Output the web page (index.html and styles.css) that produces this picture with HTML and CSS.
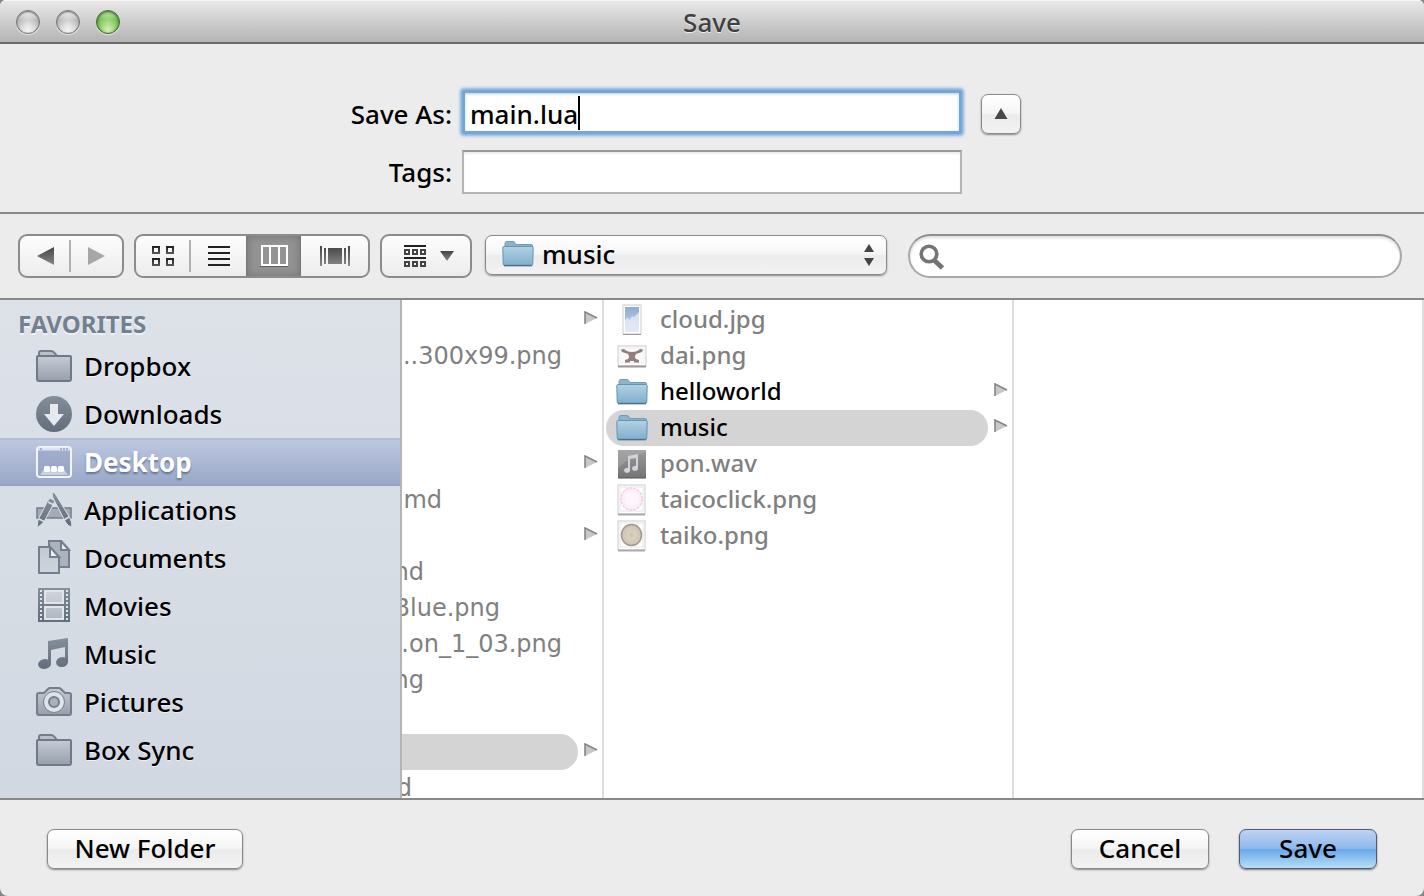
FILE: index.html
```html
<!DOCTYPE html>
<html lang="en">
<head>
<meta charset="utf-8">
<title>Save</title>
<link rel="stylesheet" href="styles.css">
</head>
<body>
<svg class="defs" aria-hidden="true">
  <defs>
    <linearGradient id="steel" x1="0" y1="0" x2="0" y2="1"><stop offset="0" stop-color="#858e9b"/><stop offset="1" stop-color="#636d7b"/></linearGradient>
    <linearGradient id="pale" x1="0" y1="0" x2="0" y2="1"><stop offset="0" stop-color="#c6cbd4"/><stop offset="1" stop-color="#979fac"/></linearGradient>
    <linearGradient id="paper" x1="0" y1="0" x2="0" y2="1"><stop offset="0" stop-color="#c3c9d1"/><stop offset="1" stop-color="#cfd5dd"/></linearGradient>
    <linearGradient id="blue" x1="0" y1="0" x2="0" y2="1"><stop offset="0" stop-color="#b4d1e3"/><stop offset="1" stop-color="#7eaece"/></linearGradient>
    <linearGradient id="dark" x1="0" y1="0" x2="0" y2="1"><stop offset="0" stop-color="#222"/><stop offset="1" stop-color="#555"/></linearGradient>
    <linearGradient id="mid" x1="0" y1="0" x2="0" y2="1"><stop offset="0" stop-color="#444"/><stop offset="1" stop-color="#888"/></linearGradient>
    <linearGradient id="sky" x1="0" y1="0" x2="0" y2="1"><stop offset="0" stop-color="#8eabd3"/><stop offset="1" stop-color="#c9daee"/></linearGradient>
    <linearGradient id="wav" x1="0" y1="0" x2="0" y2="1"><stop offset="0" stop-color="#9a9a9a"/><stop offset="1" stop-color="#747474"/></linearGradient>
    <radialGradient id="drum"><stop offset="0" stop-color="#cfbfa4"/><stop offset=".3" stop-color="#dbd0be"/><stop offset="1" stop-color="#cdc4b6"/></radialGradient>
    <symbol id="folder" viewBox="0 0 32 28">
      <path d="M3 6V3.500Q3 1.500 5 1.500H11Q12.500 1.500 13 3L13.500 4.500H29.500Q30.500 4.500 30.500 6V9H3Z" fill="#8db4cd" stroke="#6f9bb8"/>
      <path d="M.8 8Q.8 6.500 2 6.500H30Q31.200 6.500 31.200 8L30.800 24Q30.700 25.500 29.500 25.500H2.500Q1.300 25.500 1.200 24Z" fill="url(#blue)" stroke="#6694b3"/>
      <path d="M2 25.600H30" stroke="#4f7085" stroke-width="1.500"/>
    </symbol>
    <symbol id="side-folder" viewBox="0 0 36 36">
      <path d="M3 8V5Q3 3 5 3H15Q17 3 18 4.500L21 8" fill="#b9c0ca" stroke="#737d8c" stroke-width="2"/>
      <path d="M2 8H34Q35 8 35 9V31Q35 33 33 33H3Q1 33 1 31V9Q1 8 2 8Z" fill="url(#pale)" stroke="#6f7988" stroke-width="2"/>
    </symbol>
    <symbol id="more" viewBox="0 0 14 14"><path d="M1 1L13 7L1 13Z" fill="#c8c8c8"/><path d="M1 13V1L13 7" fill="none" stroke="#858585" stroke-width="1.600"/></symbol>
  </defs>
</svg>

<main class="window">
  <header class="titlebar">
    <div class="lights">
      <button class="light" aria-label="Close"></button>
      <button class="light" aria-label="Minimize"></button>
      <button class="light light-zoom" aria-label="Zoom"></button>
    </div>
    <h1>Save</h1>
  </header>

  <section class="form">
    <label class="form-label first" for="name">Save As:</label>
    <div class="field">
      <input class="text-input focused" id="name" type="text" value="main.lua">
      <span class="caret"></span>
    </div>
    <button class="push collapse" aria-label="Collapse">
      <svg width="14" height="12" viewBox="0 0 14 12"><path d="M7 0L13.500 11H.5Z" fill="#484848"/></svg>
    </button>
    <label class="form-label" for="tags">Tags:</label>
    <div class="field"><input class="text-input" id="tags" type="text"></div>
  </section>

  <nav class="toolbar">
    <div class="segments nav-group">
      <button class="segment" aria-label="Back"><svg width="18" height="18" viewBox="0 0 18 18"><path d="M17 0V18L0 9Z" fill="url(#mid)"/></svg></button>
      <button class="segment" aria-label="Forward"><svg width="18" height="18" viewBox="0 0 18 18"><path d="M0 0V18L17 9Z" fill="#a6a6a6"/></svg></button>
    </div>
    <div class="segments view-group">
      <button class="segment" aria-label="Icons"><svg width="24" height="22" viewBox="0 0 24 22"><g fill="none" stroke="url(#dark)" stroke-width="2"><rect x="1" y="2" width="6" height="6"/><rect x="15" y="2" width="6" height="6"/><rect x="1" y="14" width="6" height="6"/><rect x="15" y="14" width="6" height="6"/></g></svg></button>
      <button class="segment" aria-label="List"><svg width="22" height="20" viewBox="0 0 22 20"><path d="M0 0H22V2H0ZM0 6H22V8H0ZM0 12H22V14H0ZM0 18H22V20H0Z" fill="#222"/></svg></button>
      <button class="segment active" aria-label="Columns" aria-pressed="true"><svg width="28" height="22" viewBox="0 0 28 22"><path d="M0 21.500H28" stroke="#606060"/><path d="M2 1H27V20H2ZM10 2V19M19 2V19" fill="none" stroke="#fff" stroke-width="2"/></svg></button>
      <button class="segment" aria-label="Cover Flow"><svg width="30" height="20" viewBox="0 0 30 20"><path d="M0 0H2V20H0ZM4 2H6V18H4ZM8 2H22V18H8ZM24 2H26V18H24ZM28 0H30V20H28Z" fill="url(#mid)"/></svg></button>
    </div>
    <button class="segments arrange" aria-label="Arrange" aria-haspopup="true">
      <svg width="22" height="22" viewBox="0 0 22 22"><path d="M0 0H22V2H0ZM0 12H22V14H0Z" fill="#222"/><g fill="none" stroke="#444" stroke-width="2"><path d="M1 5H5V9H1ZM9 5H13V9H9ZM17 5H21V9H17ZM1 17H5V21H1ZM9 17H13V21H9ZM17 17H21V21H17Z"/></g></svg>
      <svg width="14" height="10" viewBox="0 0 14 10"><path d="M0 0H14L7 10Z" fill="url(#mid)"/></svg>
    </button>
    <div class="popup">
      <select class="push" aria-label="Location"><option>music</option></select>
      <svg class="popup-folder" width="32" height="28"><use href="#folder"/></svg>
      <svg class="popup-arrows" width="10" height="22" viewBox="0 0 10 22"><path d="M5 0L10 8H0ZM0 14H10L5 22Z" fill="#444"/></svg>
    </div>
    <div class="search">
      <input type="search" aria-label="Search">
      <svg class="lens" width="26" height="28" viewBox="0 0 26 28"><circle cx="10" cy="11" r="7.800" fill="none" stroke="#757575" stroke-width="3.600"/><path d="M15.500 17.500L23.500 25" stroke="#757575" stroke-width="4.800"/></svg>
    </div>
  </nav>

  <section class="browser">
    <aside class="sidebar">
      <h2>FAVORITES</h2>
      <ul>
        <li><svg class="side-icon"><use href="#side-folder"/></svg>Dropbox</li>
        <li><svg class="side-icon" viewBox="0 0 36 36"><circle cx="18" cy="18" r="18" fill="url(#steel)"/><path d="M14 8H22V18H28L18 30L8 18H14Z" fill="#e6eaef"/></svg>Downloads</li>
        <li class="selected"><svg class="side-icon" viewBox="0 0 36 36"><rect x="1" y="3" width="34" height="30" rx="3" fill="#8d9cbd" fill-opacity=".5" stroke="#f3f5fa" stroke-width="2"/><path d="M2 5H34" stroke="#dde3ef" stroke-width="3"/><path d="M24 5H26M27 5H29M30 5H32M4 5H6" stroke="#6f7d9c"/><path d="M8 25H28L32 31H4Z" fill="#c8d0e2"/><g fill="#fff"><rect x="8" y="22" width="6" height="6" rx="1.500"/><rect x="15" y="22" width="6" height="6" rx="1.500"/><rect x="22" y="22" width="6" height="6" rx="1.500"/></g></svg>Desktop</li>
        <li><svg class="side-icon" viewBox="0 0 36 36"><path d="M1 16H35V26H1Z" fill="#a3abb7" stroke="#747e8c" stroke-width="1.500"/><path d="M12 8Q14 5 18 8Q19 9 18 11L8 30L1 36L2 28Z" fill="url(#steel)" stroke="#dce1e8"/><path d="M16 1Q18-1 20 3L34 26Q36 30 36 35Q32 34 30 31L17 6Z" fill="url(#steel)" stroke="#dce1e8"/><path d="M12 10L18 13M3 27L9 30M28 28L33 25" stroke="#dce1e8" stroke-width="1.500"/></svg>Applications</li>
        <li><svg class="side-icon" viewBox="0 0 36 36"><g stroke="#747e8c" stroke-width="2"><path d="M13 1H25L33 10V27H13Z" fill="#abb3be"/><path d="M25 1V10H33Z" fill="#e8ebef"/><path d="M3 7H14L23 17V33H3Z" fill="url(#paper)"/><path d="M14 7V17H23Z" fill="#edf0f3"/></g></svg>Documents</li>
        <li><svg class="side-icon" viewBox="0 0 36 36"><path d="M2 0H34V34H2Z" fill="url(#steel)"/><path d="M8 2H28V16H8ZM8 18H28V32H8Z" fill="#e1e5ea"/><path d="M10 4H26V14H10ZM10 20H26V30H10Z" fill="url(#pale)" opacity=".65"/><path d="M5 2V33M31 2V33" stroke="#dfe4e9" stroke-width="2" stroke-dasharray="2 2"/></svg>Movies</li>
        <li><svg class="side-icon" viewBox="0 0 36 36"><path d="M12 5L32 2V25A6 5 -10 1 1 29 21.500V11L15 14V27A6.500 5 -10 1 1 12 23.500Z" fill="url(#steel)"/></svg>Music</li>
        <li><svg class="side-icon" viewBox="0 0 36 36"><path d="M3 9H8L12 5Q13 4 14 4H23Q24 4 25 5L29 9H33Q35 9 35 11V29Q35 31 33 31H3Q1 31 1 29V11Q1 9 3 9Z" fill="url(#pale)" stroke="#747e8c" stroke-width="2"/><circle cx="18" cy="18" r="10.500" fill="#dfe3e9" stroke="#747e8c"/><circle cx="18" cy="18" r="5" fill="#a9b1bc" stroke="#747e8c" stroke-width="2"/></svg>Pictures</li>
        <li><svg class="side-icon"><use href="#side-folder"/></svg>Box Sync</li>
      </ul>
    </aside>

    <ul class="column parent">
      <li><svg class="more"><use href="#more"/></svg></li>
      <li><span class="tail tail-long">..300x99.png</span></li>
      <li></li>
      <li></li>
      <li><svg class="more"><use href="#more"/></svg></li>
      <li><span class="tail tail-short">.md</span></li>
      <li><svg class="more"><use href="#more"/></svg></li>
      <li><span class="tail tail-tiny">md</span></li>
      <li><span class="tail tail-medium">Blue.png</span></li>
      <li><span class="tail tail-long">.on_1_03.png</span></li>
      <li><span class="tail tail-tiny">ng</span></li>
      <li></li>
      <li class="chosen"><svg class="more"><use href="#more"/></svg></li>
      <li><span class="tail tail-edge">d</span></li>
    </ul>

    <ul class="column">
      <li><svg class="file-icon" viewBox="0 0 32 32"><rect x="7" y="1" width="18" height="29" fill="#fff" stroke="#ccc"/><path d="M7 30.500H25" stroke="#999"/><path d="M9 3H23V28H9Z" fill="url(#sky)"/><path d="M9 16Q12 12 14 16Q15 11 18 13L23 8V28H9Z" fill="#eef2f8" opacity=".7"/></svg><span>cloud.jpg</span></li>
      <li><svg class="file-icon" viewBox="0 0 32 32"><rect x="2" y="6" width="28" height="20" fill="#fff" stroke="#ccc"/><path d="M2 26.500H30" stroke="#999" stroke-width="2"/><rect x="4" y="8" width="24" height="15" fill="#fafafa" stroke="#eee"/><path d="M5 9.500L8 9Q11 12 16 12T24 9L27 9.500L26 12L20 14Q18 17 20 19L23 20V22.500H18V21H14V22.500H9V20L12 19Q14 17 12 14L6 12Z" fill="#92807e"/></svg><span>dai.png</span></li>
      <li class="enabled"><svg class="file-icon" viewBox="0 0 32 32"><use href="#folder" y="2" width="32" height="28"/></svg><span>helloworld</span><svg class="more"><use href="#more"/></svg></li>
      <li class="enabled chosen"><svg class="file-icon" viewBox="0 0 32 32"><use href="#folder" y="2" width="32" height="28"/></svg><span>music</span><svg class="more"><use href="#more"/></svg></li>
      <li><svg class="file-icon" viewBox="0 0 32 32"><path d="M2 2H30V30H2Z" fill="url(#wav)"/><path d="M2 2H30V4Q15 8 2 20Z" fill="#bbb" opacity=".35"/><path d="M12 8L22 6V20A3 2.500 0 1 1 20 18V10L14 11V22A3 2.500 0 1 1 12 20Z" fill="#d0d3d8"/><path d="M2 30H30" stroke="#555"/></svg><span>pon.wav</span></li>
      <li><svg class="file-icon" viewBox="0 0 32 32"><rect x="2" y="1" width="27" height="29" fill="#fff" stroke="#ccc"/><path d="M2 30.500H29" stroke="#aaa" stroke-width="2"/><rect x="4" y="3" width="23" height="24" fill="#fff" stroke="#e6e6e6"/><ellipse cx="15.500" cy="15" rx="10.500" ry="11" fill="#fdeffa" stroke="#f3cbe9" stroke-width="1.500" stroke-dasharray="3 1"/><circle cx="16" cy="15" r="7" fill="#fff5fc"/></svg><span>taicoclick.png</span></li>
      <li><svg class="file-icon" viewBox="0 0 32 32"><rect x="2" y="1" width="27" height="29" fill="#fff" stroke="#ccc"/><path d="M2 30.500H29" stroke="#aaa" stroke-width="2"/><rect x="4" y="3" width="23" height="24" fill="#fff" stroke="#e6e6e6"/><ellipse cx="15.500" cy="15" rx="10" ry="10.500" fill="url(#drum)" stroke="#a39789" stroke-width="1.500"/></svg><span>taiko.png</span></li>
    </ul>
    <ul class="column"></ul>
  </section>

  <footer class="footer">
    <button class="push new-folder">New Folder</button>
    <div class="actions">
      <button class="push action">Cancel</button>
      <button class="push action default">Save</button>
    </div>
  </footer>
</main>
</body>
</html>
```
FILE: styles.css
```css
* { box-sizing: border-box; }

body {
  margin: 0;
  background: #858585;
  color: #000;
  font: 500 26px/36px "Noto Sans", "Open Sans", sans-serif;
}

button, input, select {
  margin: 0;
  padding: 0;
  border: 0;
  color: inherit;
  font: inherit;
  outline: none;
}

ul { margin: 0; padding: 0; list-style: none; }
svg { display: block; flex: none; }
.defs { position: absolute; width: 0; height: 0; }

.window {
  display: flex;
  flex-direction: column;
  min-height: 100vh;
  overflow: hidden;
  border-radius: 6px 6px 8px 8px;
  background: #ececec;
}

/* Title bar */
.titlebar {
  display: grid;
  grid-template-columns: 1fr auto 1fr;
  align-items: center;
  height: 44px;
  padding: 2px 16px 0;
  border-bottom: 2px solid #6a6a6a;
  background: linear-gradient(#e9e9e9, #b4b4b4);
  box-shadow: inset 0 1px 0 #f6f6f6;
}

.titlebar h1 {
  margin: 0;
  color: #404040;
  font-size: 26px;
  font-weight: 500;
  text-shadow: 0 1px 0 #eee;
}

.lights { display: flex; gap: 16px; }

.light {
  width: 24px;
  height: 24px;
  border: 1px solid #777;
  border-radius: 50%;
  background: radial-gradient(ellipse at 50% 90%, #f2f2f2, transparent 60%), linear-gradient(#f0f0f0, #bdbdbd 45%, #dcdcdc);
  box-shadow: inset 0 1px 2px #666, 0 1px 1px #e6e6e6;
}

.light-zoom {
  border-color: #3c6a2b;
  background: radial-gradient(ellipse at 50% 95%, #d8f2c0, transparent 60%), linear-gradient(#cdeebc, #7cc455 40%, #96d474);
  box-shadow: inset 0 1px 3px #285414, 0 1px 1px #e6e6e6;
}

/* Name and tags */
.form {
  display: grid;
  grid-template-columns: 1fr 500px 1fr;
  grid-auto-rows: 44px;
  gap: 16px 10px;
  padding: 46px 0 18px;
  border-bottom: 2px solid #888;
}

.form-label { line-height: 44px; text-align: right; }
.first { padding-top: 2px; }
.field { position: relative; }

.text-input {
  width: 100%;
  height: 44px;
  padding: 0 8px;
  border: 2px solid #b4b4b4;
  border-top-color: #979797;
  background: #fff;
  box-shadow: inset 0 2px 2px #eee;
}

.focused {
  padding: 3px 5px 0;
  border: 3px solid #76a6d6;
  border-radius: 2px;
  box-shadow: 0 0 3px 2px #7fb1e0, inset 0 1px 3px #b9cee2;
}

.caret {
  position: absolute;
  top: 6px;
  left: 116px;
  width: 2px;
  height: 34px;
  background: #000;
}

.push {
  height: 40px;
  border: 1px solid #8a8a8a;
  border-radius: 7px;
  background: linear-gradient(#fff, #f5f5f5 48%, #ebebeb 52%, #f3f3f3);
  box-shadow: 0 1px 2px #888;
  text-align: center;
}

.collapse {
  display: grid;
  place-items: center;
  align-self: end;
  width: 40px;
  margin-left: 9px;
}

/* Toolbar */
.toolbar {
  display: flex;
  align-items: center;
  gap: 10px;
  height: 86px;
  padding: 0 22px 0 18px;
  border-bottom: 2px solid #888;
}

.segments {
  display: flex;
  height: 44px;
  overflow: hidden;
  border: 2px solid #8c8c8c;
  border-radius: 9px;
  background: linear-gradient(#fdfdfd, #ececec);
}

.nav-group { width: 106px; }
.view-group { width: 236px; }

.segment {
  display: grid;
  flex: 1 1 54px;
  place-items: center;
  background: linear-gradient(#b0b0b0, #b0b0b0) right center / 2px 32px no-repeat;
}

.segment:last-child { background: none; }
.view-group .segment:nth-child(2) { background: none; }
.view-group .segment:last-child { flex-basis: 66px; }

.view-group .active {
  border: solid #777;
  border-width: 0 1px;
  background: #939393;
  box-shadow: inset 0 0 8px #707070;
}

.arrange {
  align-items: center;
  justify-content: center;
  gap: 14px;
  width: 92px;
  padding-left: 6px;
}

.popup {
  position: relative;
  align-self: flex-start;
  width: 402px;
  margin: 21px 0 0 3px;
}

.popup select {
  display: block;
  width: 100%;
  padding: 0 40px 2px 56px;
  appearance: none;
  text-align: left;
}

.popup-folder, .popup-arrows, .lens { position: absolute; pointer-events: none; }
.popup-folder { top: 5px; left: 17px; }
.popup-arrows { top: 9px; right: 13px; }

.search { position: relative; flex: 1; margin-left: 11px; }

.search input {
  display: block;
  width: 100%;
  height: 44px;
  padding: 0 20px 0 44px;
  border: 2px solid #a8a8a8;
  border-top-color: #8f8f8f;
  border-radius: 22px;
  background: #fff;
  box-shadow: inset 0 2px 3px #ddd;
  appearance: none;
}

.lens { top: 9px; left: 11px; }

/* Browser */
.browser {
  display: grid;
  grid-template-columns: 402px 202px 410px 1fr;
  flex: 1 0 498px;
  height: 498px;
  background: #fff;
}

.sidebar {
  border-right: 2px solid #b4b4b4;
  background: linear-gradient(#dde2e9, #d1d8e1);
}

.sidebar h2 {
  height: 42px;
  margin: 0;
  padding: 6px 18px 0;
  color: #72808f;
  font-size: 24px;
  line-height: 36px;
  text-shadow: 0 2px 0 #eef1f4;
}

.sidebar li {
  display: flex;
  align-items: center;
  gap: 12px;
  height: 48px;
  padding: 0 36px;
  text-shadow: 0 1px 0 #eef1f4;
}

.sidebar .selected {
  border-top: 2px solid #b1bdd6;
  border-bottom: 2px solid #93a2c0;
  background: linear-gradient(#bdc7e0, #99a8c8);
  color: #fff;
  font-weight: 700;
  text-shadow: 0 2px 2px #66758f;
}

.side-icon { width: 36px; height: 36px; }

.column {
  min-width: 0;
  height: 498px;
  padding-top: 2px;
  overflow: hidden;
  border-right: 2px solid #dedede;
  color: #808080;
  font-size: 24px;
}

.column li {
  display: flex;
  align-items: center;
  gap: 12px;
  height: 36px;
  padding: 0 4px 0 12px;
}

.column span { padding-bottom: 2px; }
.column .enabled { color: #000; }

.column .chosen {
  position: relative;
  z-index: 0;
}

.column .chosen::before {
  content: "";
  position: absolute;
  z-index: -1;
  inset: 0 24px 0 2px;
  border-radius: 18px;
  background: #d4d4d4;
}

.file-icon { width: 32px; height: 32px; }
.more { width: 14px; height: 14px; margin: 0 0 4px auto; }

.parent { font: 24px/36px "DejaVu Sans", sans-serif; }
.parent li { padding-left: 0; }
.parent span { padding-bottom: 0; }
.parent .chosen::before { left: 0; border-radius: 0 18px 18px 0; }

.tail {
  display: flex;
  justify-content: flex-end;
  overflow: hidden;
  white-space: nowrap;
}

.tail-long { width: 160px; }
.tail-medium { width: 98px; }
.tail-short { width: 40px; }
.tail-tiny { width: 22px; }
.tail-edge { width: 10px; }

/* Footer */
.footer {
  display: flex;
  align-items: center;
  justify-content: space-between;
  height: 98px;
  padding: 2px 47px 0;
  border-top: 2px solid #888;
}

.actions { display: flex; gap: 30px; }
.new-folder { width: 196px; }
.action { width: 138px; }

.footer .push { padding-bottom: 2px; }

.default {
  border-color: #55577f;
  background: linear-gradient(#bed3f1, #8fb9ec 48%, #6ba8ea 52%, #b5dff5);
  box-shadow: 0 1px 2px #777;
}
```
